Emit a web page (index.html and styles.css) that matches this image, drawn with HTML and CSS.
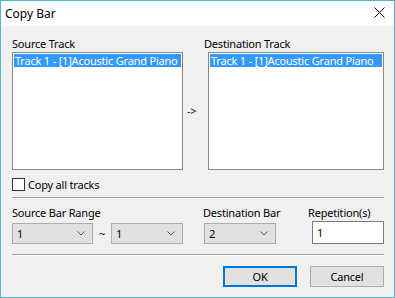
FILE: index.html
```html
<!DOCTYPE html>
<html>
<head>
<meta charset="utf-8">
<link rel="stylesheet" href="styles.css">
</head>
<body>
<div class="window">
  <div class="titlebar">
    <span class="title">Copy Bar</span>
    <svg class="close" width="11" height="11" viewBox="0 0 11 11"><path d="M0.5 0.5 L10.5 10.5 M10.5 0.5 L0.5 10.5" stroke="#000" stroke-width="1" fill="none"/></svg>
  </div>
  <div class="content">
    <div class="tracks">
      <div class="label">Source Track</div>
      <div class="spacer"></div>
      <div class="label dst-label">Destination Track</div>
      <div class="list"><div class="item">Track 1 - [1]Acoustic Grand Piano</div></div>
      <div class="arrow"><span class="dash">-</span>&gt;</div>
      <div class="list"><div class="item">Track 1 - [1]Acoustic Grand Piano</div></div>
    </div>
    <div class="check"><span class="box"></span><span>Copy all tracks</span></div>
    <div class="sep"></div>
    <div class="bars">
      <div class="label">Source Bar Range</div>
      <div class="label dbar-label">Destination Bar</div>
      <div class="label rep-label">Repetition(s)</div>
      <div class="range">
        <div class="combo w80"><span>1</span><svg class="chev" width="8" height="5" viewBox="0 0 8 5"><path d="M0.5 0.5 L4 4 L7.5 0.5" stroke="#555" fill="none"/></svg></div>
        <span class="tilde">~</span>
        <div class="combo w71"><span>1</span><svg class="chev" width="8" height="5" viewBox="0 0 8 5"><path d="M0.5 0.5 L4 4 L7.5 0.5" stroke="#555" fill="none"/></svg></div>
      </div>
      <div class="combo w71"><span>2</span><svg class="chev" width="8" height="5" viewBox="0 0 8 5"><path d="M0.5 0.5 L4 4 L7.5 0.5" stroke="#555" fill="none"/></svg></div>
      <div class="input">1</div>
    </div>
    <div class="sep sep2"></div>
    <div class="buttons">
      <div class="btn default">OK</div>
      <div class="btn">Cancel</div>
    </div>
  </div>
</div>
</body>
</html>
```
FILE: styles.css
```css
* { box-sizing: border-box; }
html, body { margin: 0; padding: 0; }
body {
  width: 395px;
  height: 298px;
  font-family: "Segoe UI", "Noto Sans", sans-serif;
  font-size: 11px;
  letter-spacing: -0.2px;
  color: #000;
  background: #f0f0f0;
}
.window {
  width: 395px;
  height: 298px;
  border: 1px solid #4db7c9;
  background: #f0f0f0;
  display: flex;
  flex-direction: column;
}
.titlebar {
  height: 25px;
  background: #fff;
  display: flex;
  align-items: center;
  justify-content: space-between;
  padding: 0 9px 0 4px;
}
.title { font-size: 12px; letter-spacing: 0; line-height: 15px; margin-top: -1px; }
.close { display: block; margin-top: -2px; }
.content {
  padding: 9px 10px 0 11px;
  display: flex;
  flex-direction: column;
}
.label { line-height: 17px; height: 17px; white-space: nowrap; }
.tracks {
  display: grid;
  grid-template-columns: 171px 25px 176px;
  grid-template-rows: 17px 118px;
}
.dst-label { margin-left: -4px; }
.list {
  background: #fff;
  border: 1px solid #828790;
  padding: 1px;
}
.item {
  background: #3399ff;
  color: #fff;
  height: 13px;
  line-height: 13px;
  padding-left: 1px;
  white-space: nowrap;
  overflow: hidden;
}
.arrow {
  align-self: center;
  padding-left: 4px;
  line-height: 14px;
  color: #111;
}
.dash { color: #b00000; }
.check {
  margin-top: 8px;
  height: 13px;
  display: flex;
  align-items: center;
  gap: 3px;
  line-height: 13px;
}
.box {
  width: 13px;
  height: 13px;
  border: 1px solid #333;
  background: #fff;
  flex: none;
}
.sep {
  margin-top: 6px;
  height: 2px;
  border-top: 1px solid #a0a0a0;
  border-bottom: 1px solid #fff;
}
.sep2 { margin-top: 10px; }
.bars {
  margin-top: 5px;
  display: grid;
  grid-template-columns: 192px 108px 72px;
  grid-template-rows: 17px 23px;
  align-items: end;
}
.dbar-label { margin-left: -1px; }
.rep-label { margin-left: -4px; }
.range { display: flex; align-items: center; }
.combo {
  height: 21px;
  background: #e1e1e1;
  border: 1px solid #adadad;
  display: flex;
  align-items: center;
  justify-content: space-between;
  padding: 0 7px 0 4px;
}
.chev { display: block; }
.w80 { width: 81px; }
.w71 { width: 72px; }
.tilde { width: 18px; text-align: center; line-height: 21px; }
.input {
  height: 23px;
  background: #fff;
  border: 1px solid #7a7a7a;
  padding-left: 4px;
  line-height: 21px;
}
.buttons {
  margin-top: 10px;
  display: flex;
  justify-content: flex-end;
  gap: 13px;
}
.btn {
  width: 74px;
  height: 21px;
  background: #e1e1e1;
  border: 1px solid #adadad;
  text-align: center;
  line-height: 19px;
}
.btn.default {
  border: 2px solid #0078d7;
  line-height: 17px;
}
```
